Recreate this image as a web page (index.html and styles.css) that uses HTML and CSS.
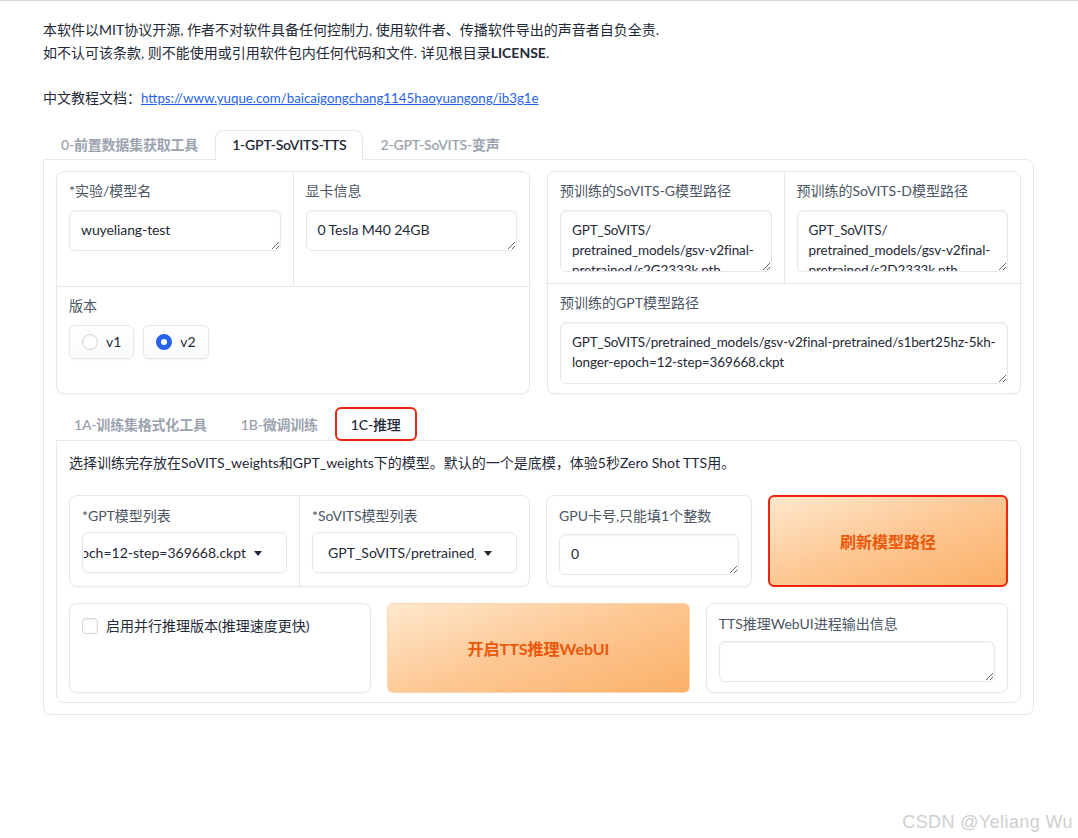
FILE: index.html
```html
<!DOCTYPE html>
<html lang="zh-CN">
<head>
<meta charset="utf-8">
<title>GPT-SoVITS WebUI</title>
<link rel="stylesheet" href="styles.css">
</head>
<body>
<div class="page">
  <div class="intro">
    <p>本软件以MIT协议开源, 作者不对软件具备任何控制力, 使用软件者、传播软件导出的声音者自负全责.<br>如不认可该条款, 则不能使用或引用软件包内任何代码和文件. 详见根目录<b>LICENSE</b>.</p>
    <p>中文教程文档：<a href="#">https://www.yuque.com/baicaigongchang1145haoyuangong/ib3g1e</a></p>
  </div>

  <div class="tabs">
    <div class="tabbar">
      <div class="tab">0-前置数据集获取工具</div>
      <div class="tab active">1-GPT-SoVITS-TTS</div>
      <div class="tab">2-GPT-SoVITS-变声</div>
    </div>
    <div class="tabpanel">
      <div class="toprow">
        <div class="group g-left">
          <div class="cell">
            <div class="label">*实验/模型名</div>
            <textarea class="ta ta-1" rows="1">wuyeliang-test</textarea>
          </div>
          <div class="cell">
            <div class="label">显卡信息</div>
            <textarea class="ta ta-1" rows="1">0 Tesla M40 24GB</textarea>
          </div>
          <div class="cell span2">
            <div class="label">版本</div>
            <div class="radios">
              <label class="pill"><span class="radio"></span>v1</label>
              <label class="pill"><span class="radio checked"></span>v2</label>
            </div>
          </div>
        </div>
        <div class="group g-right">
          <div class="cell">
            <div class="label">预训练的SoVITS-G模型路径</div>
            <textarea class="ta ta-3" rows="3">GPT_SoVITS/&#8203;pretrained_models/gsv-v2final-pretrained/s2G2333k.pth</textarea>
          </div>
          <div class="cell">
            <div class="label">预训练的SoVITS-D模型路径</div>
            <textarea class="ta ta-3" rows="3">GPT_SoVITS/&#8203;pretrained_models/gsv-v2final-pretrained/s2D2333k.pth</textarea>
          </div>
          <div class="cell span2">
            <div class="label">预训练的GPT模型路径</div>
            <textarea class="ta ta-3" rows="2">GPT_SoVITS/pretrained_models/gsv-v2final-pretrained/s1bert25hz-5kh-longer-epoch=12-step=369668.ckpt</textarea>
          </div>
        </div>
      </div>

      <div class="subtabs">
        <div class="tabbar sub">
          <div class="tab">1A-训练集格式化工具</div>
          <div class="tab">1B-微调训练</div>
          <div class="tab active marked">1C-推理</div>
        </div>
        <div class="tabpanel subpanel">
          <p class="desc">选择训练完存放在SoVITS_weights和GPT_weights下的模型。默认的一个是底模，体验5秒Zero Shot TTS用。</p>
          <div class="row1">
            <div class="group g-models">
              <div class="cell">
                <div class="label">*GPT模型列表</div>
                <div class="dd dd-scrolled">
                  <span class="dd-text rtl">GPT_SoVITS/pretrained_models/gsv-v2final-pretrained/s1bert25hz-5kh-longer-epoch=12-step=369668.ckpt</span>
                  <span class="arrow"></span>
                </div>
              </div>
              <div class="cell">
                <div class="label">*SoVITS模型列表</div>
                <div class="dd">
                  <span class="dd-text">GPT_SoVITS/pretrained_models/gsv-v2final-pretrained/s2G2333k.pth</span>
                  <span class="arrow"></span>
                </div>
              </div>
            </div>
            <div class="box">
              <div class="label">GPU卡号,只能填1个整数</div>
              <textarea class="ta ta-1" rows="1">0</textarea>
            </div>
            <button class="btn btn-refresh">刷新模型路径</button>
          </div>
          <div class="row2">
            <div class="box">
              <label class="check"><span class="checkbox"></span>启用并行推理版本(推理速度更快)</label>
            </div>
            <button class="btn btn-start">开启TTS推理WebUI</button>
            <div class="box">
              <div class="label">TTS推理WebUI进程输出信息</div>
              <textarea class="ta ta-1 out" rows="1"></textarea>
            </div>
          </div>
        </div>
      </div>
    </div>
  </div>

  <div class="watermark">CSDN @Yeliang Wu</div>
</div>
</body>
</html>
```

FILE: styles.css
```css
* { box-sizing: border-box; }

html, body {
  margin: 0;
  padding: 0;
  background: #ffffff;
}

body {
  font-family: Lato, "Noto Sans CJK SC", sans-serif;
  font-size: 14px;
  line-height: 20px;
  color: #1f2937;
}

.page {
  position: relative;
  min-height: 838px;
  border-top: 1px solid #d6d6d6;
  padding: 17px 44px 40px 43px;
}

/* intro */
.intro p {
  margin: 0;
  line-height: 23px;
  color: #1f2937;
}
.intro p + p { margin-top: 22px; }
.intro b { font-weight: 700; }
.intro a {
  color: #2563eb;
  text-decoration: underline;
  font-size: 13.3px;
}

/* tabs */
.tabs { margin-top: 20px; }

.tabbar {
  display: flex;
  padding-left: 1px;
  margin-bottom: -1px;
  position: relative;
  z-index: 1;
}

.tab {
  padding: 4px 16px;
  line-height: 20px;
  border: 1px solid transparent;
  border-bottom: none;
  border-radius: 8px 8px 0 0;
  color: #9ca3af;
  font-weight: 600;
  letter-spacing: -0.2px;
  white-space: nowrap;
}

.tab.active {
  color: #1f2937;
  background: #ffffff;
  border-color: #e5e7eb;
  padding-bottom: 5px;
}

.tabpanel {
  border: 1px solid #e5e7eb;
  border-radius: 0 8px 8px 8px;
  padding: 11px 12px;
  background: #ffffff;
}

/* top row groups */
.toprow {
  display: grid;
  grid-template-columns: 1fr 1fr;
  gap: 17px;
}

.group {
  display: grid;
  grid-template-columns: 1fr 1fr;
  gap: 1px;
  background: #e5e7eb;
  border: 1px solid #e5e7eb;
  border-radius: 8px;
  overflow: hidden;
  box-shadow: 0 1px 2px rgba(0, 0, 0, 0.04);
}

.g-left { grid-template-rows: 114px 106px; }
.g-right { grid-template-rows: 111px 109px; }

.cell {
  background: #ffffff;
  padding: 9px 12px;
  min-width: 0;
}
.span2 { grid-column: 1 / 3; }

.label {
  color: #4b5563;
  line-height: 20px;
  margin-bottom: 9px;
  white-space: nowrap;
}

.ta {
  display: block;
  width: 100%;
  font-family: inherit;
  font-size: 14px;
  line-height: 20px;
  letter-spacing: -0.1px;
  color: #1f2937;
  border: 1px solid #e5e7eb;
  border-radius: 6px;
  padding: 9px 11px;
  background: #ffffff;
  box-shadow: inset 0 1px 2px rgba(0, 0, 0, 0.05);
  overflow: hidden;
  resize: vertical;
  outline: none;
}
.ta-1 { height: 41px; }
.ta-3 {
  height: 62px;
  font-size: 13.5px;
  letter-spacing: -0.12px;
}

/* radios */
.radios {
  display: flex;
  gap: 9px;
}
.pill {
  display: flex;
  align-items: center;
  gap: 8px;
  height: 34px;
  padding: 0 12px;
  border: 1px solid #e5e7eb;
  border-radius: 6px;
  background: linear-gradient(#ffffff, #f9fafb);
  box-shadow: 0 1px 2px rgba(0, 0, 0, 0.05);
  color: #1f2937;
}
.radio {
  width: 16px;
  height: 16px;
  border-radius: 50%;
  border: 1px solid #d1d5db;
  background: #ffffff;
  box-shadow: inset 0 1px 2px rgba(0, 0, 0, 0.05);
}
.radio.checked {
  border: 5px solid #2563eb;
  background: #ffffff;
  box-shadow: none;
}

/* sub tabs */
.subtabs { margin-top: 13px; }
.tabbar.sub .tab {
  padding: 7px 16px 4px;
}
.tabbar.sub .tab.active {
  padding-bottom: 5px;
}
.tabbar.sub .tab.marked {
  border: 2px solid #f2250e;
  border-radius: 6px;
  padding: 6px 14px 4px;
  font-weight: 500;
}

.subpanel {
  border-radius: 0 8px 8px 8px;
  padding: 12px 12px 9px 12px;
}

.desc {
  margin: 0;
  line-height: 20px;
  color: #1f2937;
}

.row1 {
  margin-top: 22px;
  display: grid;
  grid-template-columns: 461px 206px 1fr;
  gap: 16px;
  height: 92px;
}

.g-models {
  grid-template-rows: 1fr;
}
.g-models .cell { padding: 10px 12px; }
.g-models .label { margin-bottom: 6px; }

.dd {
  display: flex;
  align-items: center;
  height: 41px;
  border: 1px solid #e5e7eb;
  border-radius: 6px;
  background: #ffffff;
  padding-left: 15px;
  box-shadow: 0 1px 2px rgba(0, 0, 0, 0.03);
}
.dd.dd-scrolled { padding-left: 1px; }
.dd-text {
  flex: 1;
  min-width: 0;
  overflow: hidden;
  white-space: nowrap;
  color: #1f2937;
}
.dd-text.rtl { direction: rtl; }
.arrow {
  flex: none;
  width: 0;
  height: 0;
  margin: 1px 24px 0 8px;
  border-left: 4px solid transparent;
  border-right: 4px solid transparent;
  border-top: 5px solid #1f2937;
}

.box {
  border: 1px solid #e5e7eb;
  border-radius: 8px;
  padding: 10px 12px;
  background: #ffffff;
  box-shadow: 0 1px 2px rgba(0, 0, 0, 0.04);
  min-width: 0;
}
.row1 .box .label { margin-bottom: 8px; }

.btn {
  font-family: inherit;
  font-size: 16px;
  font-weight: 700;
  color: #ea580c;
  border-radius: 6px;
  cursor: pointer;
}
.btn-refresh {
  border: 2px solid #f2250e;
  background: linear-gradient(160deg, #fee8cd 0%, #fdc793 50%, #fbb068 100%);
}
.btn-start {
  border: 1px solid #fed7aa;
  background: linear-gradient(160deg, #fee8cd 0%, #fdc793 50%, #fbb068 100%);
}

.row2 {
  margin-top: 16px;
  display: grid;
  grid-template-columns: 1fr 1fr 1fr;
  gap: 16px;
  height: 90px;
}
.row2 .box { padding: 10px 12px; }
.row2 .box .label { margin-bottom: 7px; }

.check {
  display: flex;
  align-items: center;
  gap: 8px;
  color: #1f2937;
  line-height: 20px;
  margin-top: 2px;
}
.checkbox {
  width: 16px;
  height: 16px;
  border: 1px solid #d1d5db;
  border-radius: 4px;
  background: #ffffff;
  box-shadow: inset 0 1px 2px rgba(0, 0, 0, 0.05);
}

/* watermark overlay */
.watermark {
  position: absolute;
  right: 5px;
  bottom: 6px;
  font-family: "Liberation Sans", Arial, sans-serif;
  font-size: 18px;
  letter-spacing: 0.4px;
  color: #cfcfcf;
  text-shadow: 0 0 1px rgba(255, 255, 255, 0.8);
}
```
